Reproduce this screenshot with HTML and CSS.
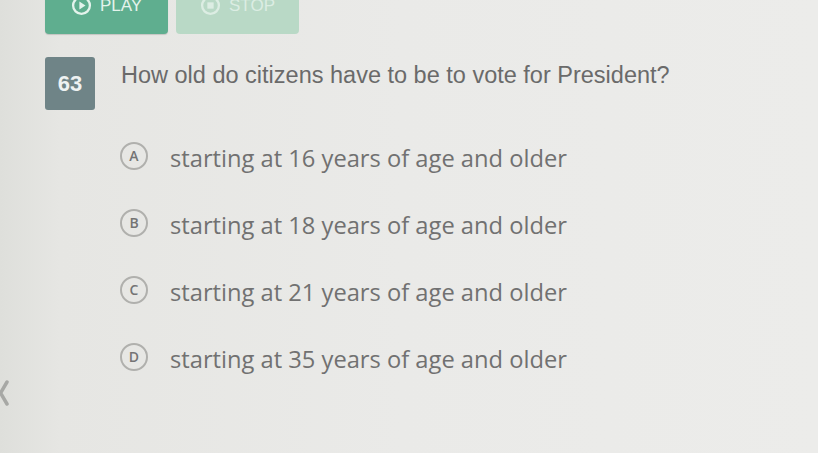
FILE: index.html
```html
<!DOCTYPE html>
<html>
<head>
<meta charset="utf-8">
<link rel="stylesheet" href="styles.css">
</head>
<body>
<div class="page">
  <div class="toolbar">
    <div class="btn btn-play">
      <svg class="btn-icon" viewBox="0 0 20 20" width="21" height="21"><circle cx="10" cy="10" r="8" fill="none" stroke="#e4f3ec" stroke-width="2.2"/><path d="M8 6.3 L13.8 10 L8 13.7 Z" fill="#e4f3ec"/></svg>
      <span>PLAY</span>
    </div>
    <div class="btn btn-stop">
      <svg class="btn-icon" viewBox="0 0 20 20" width="21" height="21"><circle cx="10" cy="10" r="8" fill="none" stroke="#dcede3" stroke-width="2.2"/><rect x="7" y="7" width="6" height="6" fill="#dcede3"/></svg>
      <span>STOP</span>
    </div>
  </div>
  <div class="question">
    <div class="badge">63</div>
    <div class="qtext">How old do citizens have to be to vote for President?</div>
  </div>
  <div class="options">
    <div class="option"><span class="letter">A</span><span class="otext">starting at 16 years of age and older</span></div>
    <div class="option"><span class="letter">B</span><span class="otext">starting at 18 years of age and older</span></div>
    <div class="option"><span class="letter">C</span><span class="otext">starting at 21 years of age and older</span></div>
    <div class="option"><span class="letter">D</span><span class="otext">starting at 35 years of age and older</span></div>
  </div>
  <svg class="back" viewBox="0 0 10 26" width="10" height="26"><path d="M8 2 L1.5 13 L8 24" fill="none" stroke="#a7a8a5" stroke-width="3.5" stroke-linecap="round" stroke-linejoin="round"/></svg>
</div>
</body>
</html>
```
FILE: styles.css
```css
html, body {
  margin: 0;
  padding: 0;
}
body {
  width: 818px;
  height: 453px;
  overflow: hidden;
  background: linear-gradient(90deg, #dedfdb 0px, #e6e6e3 60px, #eaeae8 400px, #ececea 818px);
  font-family: "Liberation Sans", Arial, sans-serif;
}
.page {
  position: relative;
  height: 453px;
  padding-top: 1px;
  margin-top: -1px;
}
.toolbar {
  display: flex;
  gap: 8px;
  padding-left: 45px;
  margin-top: -16px;
}
.btn {
  width: 123px;
  height: 50px;
  border-radius: 4px;
  display: flex;
  align-items: flex-start;
  justify-content: center;
  gap: 8px;
  padding-top: 11px;
  box-sizing: border-box;
  font-family: "Liberation Sans", Arial, sans-serif;
  font-size: 17px;
}
.btn-play {
  background: #5fae8f;
  color: #e4f3ec;
  box-shadow: 0 1px 1px rgba(0,0,0,0.15);
}
.btn-stop {
  background: #b9d9c6;
  color: #dcede3;
}
.btn span {
  line-height: 21px;
}
.question {
  display: flex;
  align-items: flex-start;
  padding-left: 45px;
  margin-top: 23px;
}
.badge {
  width: 50px;
  height: 53px;
  background: #6f8487;
  border-radius: 3px;
  color: #eef2f2;
  font-weight: bold;
  font-size: 22px;
  display: flex;
  align-items: center;
  justify-content: center;
}
.qtext {
  margin-left: 26px;
  margin-top: 4px;
  font-size: 23.5px;
  color: #6a6a6a;
  line-height: 28px;
}
.options {
  display: flex;
  flex-direction: column;
  gap: 40px;
  padding-left: 120px;
  margin-top: 32px;
}
.option {
  display: flex;
  align-items: center;
  height: 27px;
}
.letter {
  width: 24px;
  height: 24px;
  border: 2px solid #b0b0ad;
  border-radius: 50%;
  display: flex;
  align-items: center;
  justify-content: center;
  font-family: "Open Sans", sans-serif;
  font-weight: 600;
  font-size: 14px;
  color: #747474;
  flex-shrink: 0;
}
.otext {
  margin-left: 22px;
  margin-top: 4px;
  font-family: "Open Sans", sans-serif;
  font-size: 23.7px;
  color: #717171;
}
.back {
  position: absolute;
  left: -1px;
  top: 381px;
}
```
